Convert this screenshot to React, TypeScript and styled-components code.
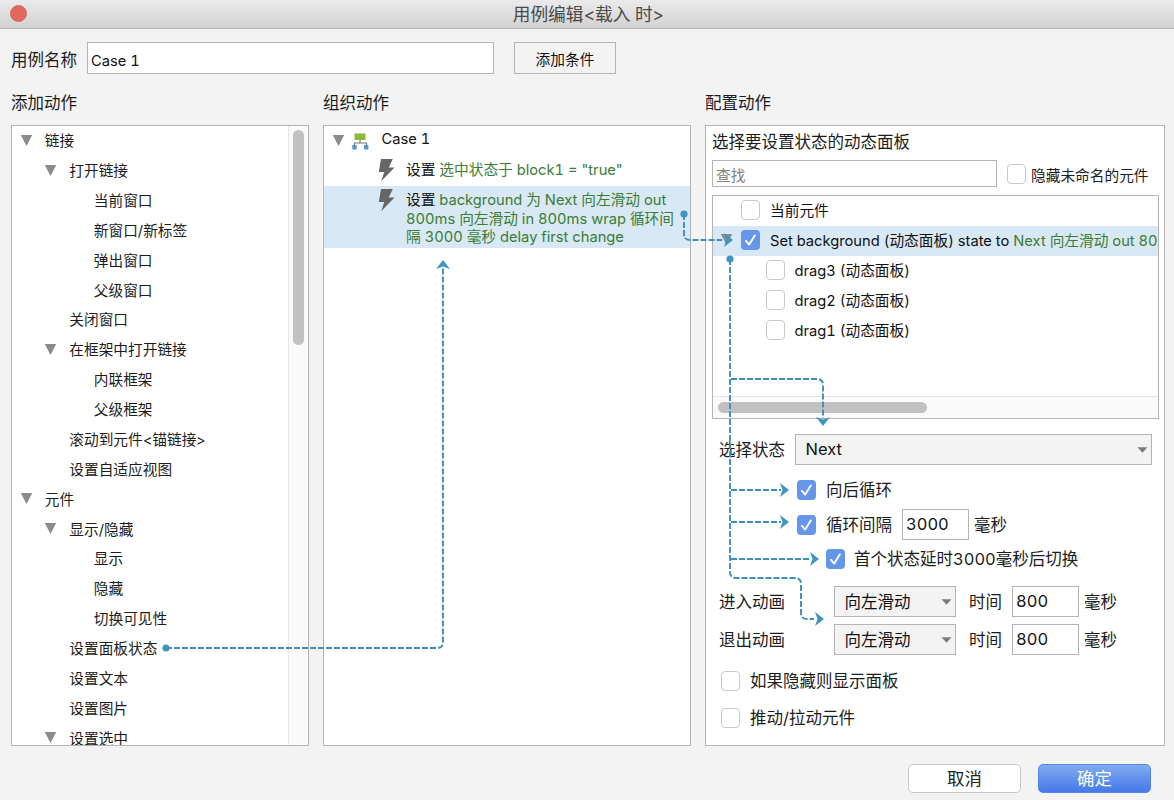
import React from "react";
import styled, { createGlobalStyle, css } from "styled-components";

const Global = createGlobalStyle`
  * { box-sizing: border-box; }
  html, body { margin: 0; padding: 0; }
  body {
    background: #f3f3f3;
    color: #1c1c1c;
    font-family: Inter, "Noto Sans CJK SC", sans-serif;
    font-size: 14.7px;
    font-variant-numeric: tabular-nums;
    overflow: hidden;
  }
`;

const Dialog = styled.div`
  position: relative;
  width: 1174px;
  height: 800px;
  display: flex;
  flex-direction: column;
  background: #f3f3f3;
  white-space: nowrap;
`;

const TitleBar = styled.header`
  height: 29px;
  flex: none;
  display: grid;
  grid-template-columns: 40px 1fr 40px;
  align-items: center;
  background: linear-gradient(#ebebeb, #d2d2d2);
  border-bottom: 1px solid #b6b6b6;
`;

const CloseDot = styled.span`
  width: 17px;
  height: 17px;
  margin: -2px 0 0 9.5px;
  border-radius: 50%;
  background: #e2695d;
  border: 1px solid #cf6a60;
`;

const Title = styled.h1`
  margin: 0;
  padding: 1px 0 0 3px;
  text-align: center;
  font-size: 17.7px;
  line-height: 28px;
  font-weight: 400;
  color: #4a4a4a;
`;

const NameRow = styled.div`
  display: flex;
  align-items: center;
  height: 32px;
  margin: 13px 0 0 11px;
`;

const Label = styled.span<{ $w?: number; $dy?: number }>`
  flex: none;
  width: ${(p) => (p.$w ? `${p.$w}px` : "auto")};
  padding-top: ${(p) => p.$dy ?? 0}px;
  font-size: 16.5px;
  line-height: 24px;
`;

const Field = styled.div<{ $w: number; $h?: number; $size?: number; $hint?: boolean }>`
  flex: none;
  display: flex;
  align-items: center;
  width: ${(p) => p.$w}px;
  height: ${(p) => p.$h ?? 31}px;
  padding-left: 3px;
  background: #fff;
  border: 1px solid #b4b4b4;
  font-size: ${(p) => p.$size ?? 16.5}px;
  color: ${(p) => (p.$hint ? "#808080" : "#111")};
`;

const FieldText = styled.span<{ $dy?: number }>`
  padding-top: ${(p) => Math.max(p.$dy ?? 0, 0)}px;
  padding-bottom: ${(p) => Math.max(-(p.$dy ?? 0), 0)}px;
  line-height: 24px;
`;

const FlatButton = styled.button`
  width: 102px;
  height: 32px;
  margin-left: 20px;
  padding: 0;
  font: inherit;
  color: #111;
  background: #f3f3f3;
  border: 1px solid #b4b4b4;
`;

const Columns = styled.main`
  display: grid;
  grid-template-columns: 298px 368px 460px;
  column-gap: 14px;
  margin: 16px 0 0 11px;
`;

const Heading = styled.h2`
  margin: 0;
  height: 35px;
  font-size: 16.5px;
  line-height: 26px;
  font-weight: 400;
`;

const Panel = styled.section`
  height: 621px;
  background: #fff;
  border: 1px solid #b4b4b4;
  overflow: hidden;
`;

const TreePanel = styled(Panel)`
  display: grid;
  grid-template-columns: 1fr 20px;
`;

const TreeList = styled.div`
  height: 619px;
  overflow: hidden;
`;

const TreeRow = styled.div<{ $depth: number }>`
  display: flex;
  align-items: center;
  height: 29.88px;
  padding-left: ${(p) => 7.8 + p.$depth * 24.5}px;
`;

const TreeText = styled.span`
  padding-bottom: 2.4px;
`;

const TwistySlot = styled.span`
  flex: none;
  width: 25px;
  height: 14px;
`;

const Scroll = styled.div<{ $horizontal?: boolean }>`
  background: #fafafa;
  ${(p) =>
    p.$horizontal
      ? css`
          height: 22px;
          padding: 5px 0 0 5px;
          border-top: 1px solid #e4e4e4;
        `
      : css`
          padding: 4px 0 0 4px;
          border-left: 1px solid #e8e8e8;
        `}
`;

const Thumb = styled.div<{ $w: number; $h: number }>`
  width: ${(p) => p.$w}px;
  height: ${(p) => p.$h}px;
  border-radius: 6px;
  background: #c1c1c1;
`;

const CaseRow = styled.div`
  display: flex;
  align-items: center;
  height: 29px;
  padding-left: 7.5px;
  color: #111;
`;

const CaseIcon = styled.svg`
  margin: 1px 13px 0 -5px;
`;

const ActionRow = styled.div<{ $selected?: boolean }>`
  display: flex;
  align-items: flex-start;
  padding: ${(p) => (p.$selected ? "5px 0 2px 54px" : "6px 0 5px 54px")};
  height: ${(p) => (p.$selected ? 62 : 31)}px;
  background: ${(p) => (p.$selected ? "#d8e8f4" : "transparent")};
`;

const Bolt = styled.svg`
  flex: none;
  margin: -2px 11px 0 0;
`;

const Lines = styled.div`
  line-height: 18.6px;
  color: #3c7d33;
`;

const Line = styled.div`
  height: 18.6px;
`;

const Strong = styled.span`
  color: #111;
`;

const Green = styled.span`
  color: #3c7d33;
`;

const ConfigPanel = styled(Panel)`
  padding: 4px 0 0 6px;
`;

const SearchRow = styled.div`
  display: flex;
  align-items: center;
  height: 27px;
  margin-top: 6px;
`;

const Box = styled.span<{ $on?: boolean; $ml?: number; $mr?: number }>`
  flex: none;
  display: flex;
  align-items: center;
  justify-content: center;
  width: 19px;
  height: 20px;
  margin-left: ${(p) => p.$ml ?? 0}px;
  margin-right: ${(p) => p.$mr ?? 10}px;
  border-radius: 4px;
  border: ${(p) => (p.$on ? "none" : "1px solid #c9c9c9")};
  background: ${(p) => (p.$on ? "#6596ea" : "#fff")};
`;

const WidgetList = styled.div`
  display: flex;
  flex-direction: column;
  width: 447px;
  height: 224px;
  margin-top: 8px;
  border: 1px solid #b4b4b4;
`;

const WidgetRows = styled.div`
  flex: 1;
  overflow: hidden;
`;

const WidgetRow = styled.div<{ $depth?: number; $selected?: boolean }>`
  display: flex;
  align-items: center;
  height: 29.9px;
  padding: 0 0 2px ${(p) => 28 + (p.$depth ?? 0) * 24.5}px;
  overflow: hidden;
  color: #111;
  white-space: pre;
  background: ${(p) => (p.$selected ? "#d8e8f4" : "transparent")};
`;

const WidgetTwisty = styled.span`
  flex: none;
  width: 21px;
  height: 14px;
  margin-left: -21px;
`;

const Row = styled.div<{ $h: number; $mt?: number; $pl?: number }>`
  display: flex;
  align-items: center;
  height: ${(p) => p.$h}px;
  margin-top: ${(p) => p.$mt ?? 0}px;
  padding-left: ${(p) => p.$pl ?? 0}px;
`;

const Select = styled.div<{ $w: number; $mr?: number }>`
  flex: none;
  display: flex;
  align-items: center;
  justify-content: space-between;
  width: ${(p) => p.$w}px;
  height: 31px;
  margin-right: ${(p) => p.$mr ?? 0}px;
  padding: 0 3px 0 9.5px;
  font-size: 16.5px;
  color: #111;
  background: #f3f3f3;
  border: 1px solid #b4b4b4;
`;

const Footer = styled.footer`
  display: flex;
  justify-content: flex-end;
  gap: 17px;
  margin: 18px 23px 0 0;
`;

const PushButton = styled.button<{ $primary?: boolean }>`
  width: 113px;
  height: 29px;
  padding: 0;
  font: inherit;
  font-size: 17.4px;
  line-height: 26px;
  border-radius: 5px;
  border: 1px solid ${(p) => (p.$primary ? "#5586e6" : "#c8c8c8")};
  color: ${(p) => (p.$primary ? "#fff" : "#222")};
  background: ${(p) => (p.$primary ? "linear-gradient(#82abf0, #4579ea)" : "#fff")};
`;

const Overlay = styled.svg`
  position: absolute;
  left: 0;
  top: 0;
  pointer-events: none;
`;

const Twisty = () => (
  <svg width="13" height="14" viewBox="0 0 13 14" style={{ display: "block" }}>
    <path d="M0.8 1H12.2L6.5 12Z" fill="#8b8b8b" />
  </svg>
);

const Caret = () => (
  <svg width="11" height="6" viewBox="0 0 11 6">
    <path d="M0.5 0.3H10.5L5.5 5.7Z" fill="#7c7c7c" />
  </svg>
);

const Check = ({ on, ml, mr }: { on?: boolean; ml?: number; mr?: number }) => (
  <Box $on={on} $ml={ml} $mr={mr}>
    {on && (
      <svg width="19" height="20" viewBox="0 0 19 20">
        <path d="M5 10.8L8.2 14.6L13.8 5.4" fill="none" stroke="#fff" strokeWidth="1.9" strokeLinecap="round" strokeLinejoin="round" />
      </svg>
    )}
  </Box>
);

const BoltIcon = () => (
  <Bolt width="17" height="23" viewBox="0 0 17 23">
    <path d="M3 0H14.8L10.8 8.6H16.5L3.2 22.2L6.3 13H0.8Z" fill="#666" />
  </Bolt>
);

const tree: { text: string; depth: number; open?: boolean }[] = [
  { text: "链接", depth: 0, open: true },
  { text: "打开链接", depth: 1, open: true },
  { text: "当前窗口", depth: 2 },
  { text: "新窗口/新标签", depth: 2 },
  { text: "弹出窗口", depth: 2 },
  { text: "父级窗口", depth: 2 },
  { text: "关闭窗口", depth: 1 },
  { text: "在框架中打开链接", depth: 1, open: true },
  { text: "内联框架", depth: 2 },
  { text: "父级框架", depth: 2 },
  { text: "滚动到元件<锚链接>", depth: 1 },
  { text: "设置自适应视图", depth: 1 },
  { text: "元件", depth: 0, open: true },
  { text: "显示/隐藏", depth: 1, open: true },
  { text: "显示", depth: 2 },
  { text: "隐藏", depth: 2 },
  { text: "切换可见性", depth: 2 },
  { text: "设置面板状态", depth: 1 },
  { text: "设置文本", depth: 1 },
  { text: "设置图片", depth: 1 },
  { text: "设置选中", depth: 1, open: true },
];

const connectors = [
  "M166 648H437Q443 648 443 642V268",
  "M684 214V234Q684 240 690 240H722",
  "M730 259V572Q730 578 736 578H795Q801 578 801 584V613Q801 619 807 619H814",
  "M731 379H817Q823 379 823 385V418",
  "M731 490H781",
  "M731 522H781",
  "M731 559H811",
];

const arrows: [number, number, number][] = [
  [443, 260, -90],
  [733, 240, 0],
  [823, 426, 90],
  [789, 490, 0],
  [789, 522, 0],
  [819, 559, 0],
  [824, 619, 0],
];

const dots: [number, number][] = [
  [166, 648],
  [684, 214],
  [730, 259],
];

const Connectors = () => (
  <Overlay width="1174" height="800" viewBox="0 0 1174 800">
    <g fill="none" stroke="#3d8fb9" strokeWidth="1.9" strokeDasharray="6 2">
      {connectors.map((d) => (
        <path key={d} d={d} />
      ))}
    </g>
    <g fill="#3f95c0">
      {arrows.map(([x, y, a]) => (
        <path key={`${x}-${y}`} d="M0 0L-9 -7L-6.5 0L-9 7Z" transform={`translate(${x} ${y}) rotate(${a})`} />
      ))}
      {dots.map(([x, y]) => (
        <circle key={`${x}-${y}`} cx={x} cy={y} r="3.6" />
      ))}
    </g>
  </Overlay>
);

const AnimationRow = ({ label, mt }: { label: string; mt: number }) => (
  <Row $h={31} $mt={mt} $pl={7}>
    <Label $w={115}>{label}</Label>
    <Select $w={122} $mr={13}>
      <FieldText>向左滑动</FieldText>
      <Caret />
    </Select>
    <Label $w={43}>时间</Label>
    <Field $w={67}>
      <FieldText $dy={-1}>800</FieldText>
    </Field>
    <Row $h={31} $pl={5}>
      <Label>毫秒</Label>
    </Row>
  </Row>
);

export default function App() {
  return (
    <>
      <Global />
      <Dialog>
        <TitleBar>
          <CloseDot />
          <Title>用例编辑&lt;载入 时&gt;</Title>
        </TitleBar>

        <NameRow>
          <Label $w={76} $dy={3}>用例名称</Label>
          <Field $w={407} $h={32} $size={14.7}>
            <FieldText $dy={6}>Case 1</FieldText>
          </Field>
          <FlatButton>添加条件</FlatButton>
        </NameRow>

        <Columns>
          <div>
            <Heading>添加动作</Heading>
            <TreePanel>
              <TreeList>
                {tree.map((n, i) => (
                  <TreeRow key={i} $depth={n.depth}>
                    <TwistySlot>{n.open && <Twisty />}</TwistySlot>
                    <TreeText>{n.text}</TreeText>
                  </TreeRow>
                ))}
              </TreeList>
              <Scroll>
                <Thumb $w={11} $h={215} />
              </Scroll>
            </TreePanel>
          </div>

          <div>
            <Heading>组织动作</Heading>
            <Panel>
              <CaseRow>
                <TwistySlot>
                  <Twisty />
                </TwistySlot>
                <CaseIcon width="17" height="17" viewBox="0 0 17 17">
                  <rect x="2.5" y="0.5" width="11" height="6.5" fill="#8cb83d" />
                  <path d="M8 7V10M2.5 12.5V10H14.5V12.5" fill="none" stroke="#777" strokeWidth="1.2" />
                  <rect x="0.3" y="12" width="4.4" height="4.5" fill="#5b94c4" />
                  <rect x="12" y="12" width="4.4" height="4.5" fill="#5b94c4" />
                </CaseIcon>
                <TreeText>Case 1</TreeText>
              </CaseRow>
              <ActionRow>
                <BoltIcon />
                <Lines>
                  <Line>
                    <Strong>设置</Strong> 选中状态于 block1 = "true"
                  </Line>
                </Lines>
              </ActionRow>
              <ActionRow $selected>
                <BoltIcon />
                <Lines>
                  <Line>
                    <Strong>设置</Strong> background 为 Next 向左滑动 out
                  </Line>
                  <Line>800ms 向左滑动 in 800ms wrap 循环间</Line>
                  <Line>隔 3000 毫秒 delay first change</Line>
                </Lines>
              </ActionRow>
            </Panel>
          </div>

          <div>
            <Heading>配置动作</Heading>
            <ConfigPanel>
              <Label>选择要设置状态的动态面板</Label>
              <SearchRow>
                <Field $w={285} $h={27} $size={14.7} $hint>
                  <FieldText $dy={5}>查找</FieldText>
                </Field>
                <Check ml={10} mr={5} />
                <FieldText $dy={4}>隐藏未命名的元件</FieldText>
              </SearchRow>

              <WidgetList>
                <WidgetRows>
                  <WidgetRow>
                    <Check />
                    当前元件
                  </WidgetRow>
                  <WidgetRow $selected>
                    <WidgetTwisty>
                      <Twisty />
                    </WidgetTwisty>
                    <Check on />
                    Set background (动态面板) state to <Green>Next 向左滑动 out 800ms</Green>
                  </WidgetRow>
                  {["drag3", "drag2", "drag1"].map((n) => (
                    <WidgetRow key={n} $depth={1}>
                      <Check />
                      {n} (动态面板)
                    </WidgetRow>
                  ))}
                </WidgetRows>
                <Scroll $horizontal>
                  <Thumb $w={209} $h={11} />
                </Scroll>
              </WidgetList>

              <Row $h={31} $mt={15} $pl={7}>
                <Label $w={76}>选择状态</Label>
                <Select $w={357}>
                  <FieldText $dy={-2}>Next</FieldText>
                  <Caret />
                </Select>
              </Row>
              <Row $h={24} $mt={13} $pl={85}>
                <Check on />
                <Label>向后循环</Label>
              </Row>
              <Row $h={31} $mt={7} $pl={85}>
                <Check on />
                <Label $w={76}>循环间隔</Label>
                <Field $w={67}>
                  <FieldText $dy={-1}>3000</FieldText>
                </Field>
                <Row $h={31} $pl={5}>
                  <Label>毫秒</Label>
                </Row>
              </Row>
              <Row $h={24} $mt={7} $pl={114}>
                <Check on mr={9} />
                <Label>首个状态延时3000毫秒后切换</Label>
              </Row>
              <AnimationRow label="进入动画" mt={15} />
              <AnimationRow label="退出动画" mt={7} />
              <Row $h={24} $mt={14} $pl={9}>
                <Check />
                <Label>如果隐藏则显示面板</Label>
              </Row>
              <Row $h={24} $mt={13} $pl={9}>
                <Check />
                <Label>推动/拉动元件</Label>
              </Row>
            </ConfigPanel>
          </div>
        </Columns>

        <Footer>
          <PushButton>取消</PushButton>
          <PushButton $primary>确定</PushButton>
        </Footer>

        <Connectors />
      </Dialog>
    </>
  );
}
